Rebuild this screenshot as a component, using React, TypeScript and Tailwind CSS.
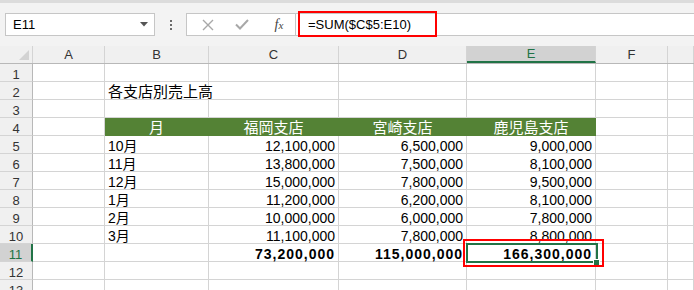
import React from "react";

const GRID = "border-[#d4d4d4]";

type Cell = { t?: string; align?: "l" | "r" | "c"; bold?: boolean; head?: boolean; big?: boolean };

const colW = ["w-[72px]", "w-[104px]", "w-[130px]", "w-[128px]", "w-[129px]", "w-[72px]", "flex-1"];
const colNames = ["A", "B", "C", "D", "E", "F", ""];

const months: [string, string, string, string][] = [
  ["10月", "12,100,000", "6,500,000", "9,000,000"],
  ["11月", "13,800,000", "7,500,000", "8,100,000"],
  ["12月", "15,000,000", "7,800,000", "9,500,000"],
  ["1月", "11,200,000", "6,200,000", "8,100,000"],
  ["2月", "10,000,000", "6,000,000", "7,800,000"],
  ["3月", "11,100,000", "7,800,000", "8,800,000"],
];

function buildRows(): Cell[][] {
  const e: Cell = {};
  const rows: Cell[][] = [];
  rows.push([e, e, e, e, e, e, e]);
  rows.push([e, { t: "各支店別売上高", align: "l", big: true }, e, e, e, e, e]);
  rows.push([e, e, e, e, e, e, e]);
  rows.push([
    e,
    { t: "月", align: "c", head: true },
    { t: "福岡支店", align: "c", head: true },
    { t: "宮崎支店", align: "c", head: true },
    { t: "鹿児島支店", align: "c", head: true },
    e,
    e,
  ]);
  for (const m of months) {
    rows.push([e, { t: m[0], align: "l" }, { t: m[1], align: "r" }, { t: m[2], align: "r" }, { t: m[3], align: "r" }, e, e]);
  }
  rows.push([
    e,
    e,
    { t: "73,200,000", align: "r", bold: true },
    { t: "115,000,000", align: "r", bold: true },
    { t: "166,300,000", align: "r", bold: true },
    e,
    e,
  ]);
  rows.push([e, e, e, e, e, e, e]);
  rows.push([e, e, e, e, e, e, e]);
  return rows;
}

function CellView({ c, w }: { c: Cell; w: string }) {
  const base = `${w} h-full shrink-0 border-r border-b flex items-end overflow-visible whitespace-nowrap`;
  if (c.head) {
    return (
      <div className={`${base} bg-[#548235] border-[#548235] justify-center`}>
        <span className="text-white text-[15px] leading-[15px] font-['Noto_Sans_CJK_JP',sans-serif] pb-[1px]">{c.t}</span>
      </div>
    );
  }
  if (!c.t) return <div className={`${base} ${GRID}`} />;
  const just = c.align === "r" ? "justify-end pr-[3px]" : c.align === "c" ? "justify-center" : "justify-start pl-[3px]";
  if (c.big) {
    return (
      <div className={`${base} ${GRID} ${just}`}>
        <span className="text-black text-[15px] leading-[15px] font-['Noto_Sans_CJK_JP',sans-serif] pb-[1px]">{c.t}</span>
      </div>
    );
  }
  return (
    <div className={`${base} ${GRID} ${just}`}>
      <span
        className={`text-black text-[14px] leading-[14px] font-['Liberation_Sans','Noto_Sans_CJK_JP',sans-serif] ${
          c.bold ? "font-bold tracking-[1px]" : ""
        }`}
      >
        {c.t}
      </span>
    </div>
  );
}

export default function App() {
  const rows = buildRows();
  return (
    <div className="relative w-[694px] h-[290px] overflow-hidden bg-white font-['Liberation_Sans',sans-serif]">
      {/* formula bar area */}
      <div className="h-[46px] bg-[#f3f3f3] border-t-[3px] border-[#dcdcdc] flex items-start pt-[10px] pl-[5px]">
        {/* name box */}
        <div className="w-[150px] h-[23px] bg-white border border-[#c6c6c6] flex items-center pl-[7px] pr-[6px] justify-between">
          <span className="text-[13px] text-black leading-none">E11</span>
          <svg width="8" height="5" viewBox="0 0 8 5"><path d="M0 0h8L4 4.5z" fill="#555" /></svg>
        </div>
        {/* dots */}
        <div className="w-[31px] h-[23px] flex flex-col items-center justify-center gap-[2px]">
          <div className="w-[2px] h-[2px] bg-[#6a6a6a]" />
          <div className="w-[2px] h-[2px] bg-[#6a6a6a]" />
          <div className="w-[2px] h-[2px] bg-[#6a6a6a]" />
        </div>
        {/* function buttons */}
        <div className="w-[110px] h-[23px] bg-white border border-[#c6c6c6] flex items-center">
          <div className="w-[40px] flex justify-center pl-[2px]">
            <svg width="12" height="12" viewBox="0 0 12 12"><path d="M1 1l10 10M11 1L1 11" stroke="#a8a8a8" strokeWidth="1.4" /></svg>
          </div>
          <div className="w-[30px] flex justify-center">
            <svg width="14" height="11" viewBox="0 0 14 11"><path d="M1 5.5l4 4L13 1" stroke="#a8a8a8" strokeWidth="2" fill="none" /></svg>
          </div>
          <div className="flex-1 flex justify-center pl-[6px]">
            <span className="font-['Liberation_Serif',serif] italic text-[14px] leading-none text-[#444]">
              f<span className="text-[11px]">x</span>
            </span>
          </div>
        </div>
        {/* formula input */}
        <div className="flex-1 h-[23px] bg-white border-y border-[#c6c6c6] flex items-center pl-[12px]">
          <span className="text-[13px] text-black leading-none">=SUM($C$5:E10)</span>
        </div>
      </div>

      {/* column header */}
      <div className="h-[18px] flex bg-[#f0f0f0] border-b border-[#b8b8b8]">
        <div className="w-[33px] shrink-0 h-full border-r border-[#d4d4d4] flex items-end justify-end pr-[3px] pb-[3px]">
          <svg width="10" height="10" viewBox="0 0 10 10"><path d="M10 0V10H0z" fill="#d3d3d3" /></svg>
        </div>
        {colNames.map((n, i) => (
          <div
            key={i}
            className={`${colW[i]} shrink-0 h-full border-r border-[#d4d4d4] flex items-center justify-center text-[13px] leading-none ${
              n === "E" ? "bg-[#d2d2d2] text-[#217346] border-b-2 border-b-[#217346]" : "text-[#333]"
            }`}
          >
            {n}
          </div>
        ))}
      </div>

      {/* rows */}
      {rows.map((r, ri) => {
        const sel = ri === 10;
        return (
          <div key={ri} className="h-[18px] flex">
            <div
              className={`w-[33px] shrink-0 h-full border-b border-[#d4d4d4] flex items-end justify-center text-[13px] leading-[13px] ${
                sel ? "bg-[#d2d2d2] text-[#217346] border-r-2 border-r-[#217346]" : "bg-[#f0f0f0] text-[#333] border-r border-r-[#b8b8b8]"
              }`}
            >
              {ri + 1}
            </div>
            {r.map((c, ci) => (
              <CellView key={ci} c={c} w={colW[ci]} />
            ))}
          </div>
        );
      })}

      {/* selection */}
      <div className="absolute left-[466px] top-[243px] w-[132px] h-[20px] border-2 border-[#217346]" />
      <div className="absolute left-[593px] top-[259px] w-[7px] h-[7px] bg-[#217346] border border-white" />
      {/* red highlight boxes */}
      <div className="absolute left-[463px] top-[239px] w-[141px] h-[28px] border-2 border-[#ff0000]" />
      <div className="absolute left-[298px] top-[11px] w-[139px] h-[26px] border-2 border-[#ff0000]" />
    </div>
  );
}
